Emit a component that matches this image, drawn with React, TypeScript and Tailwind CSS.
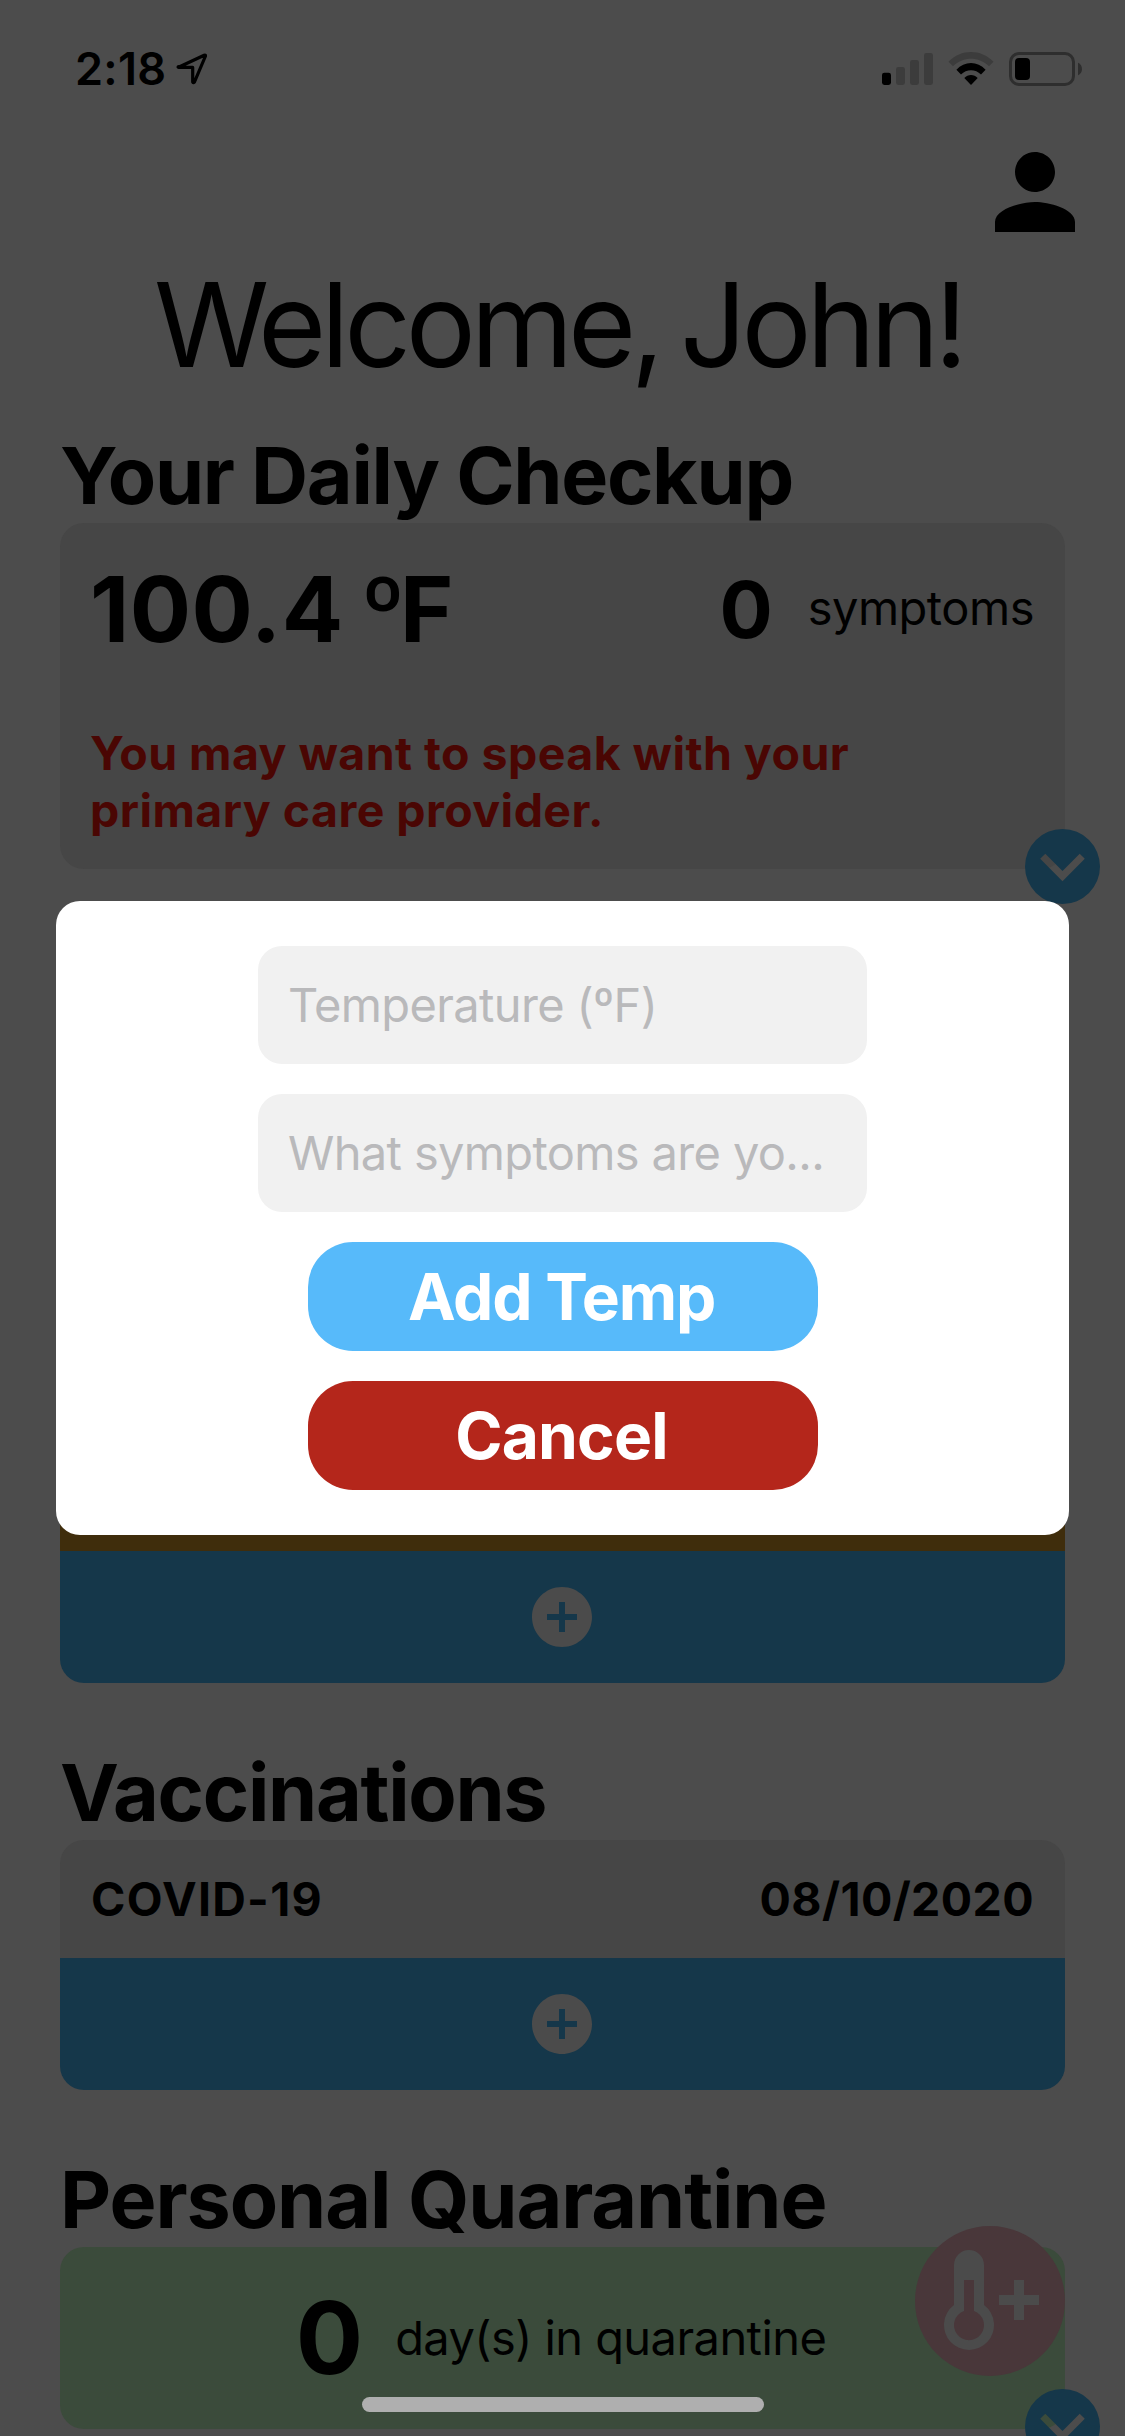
import type { ReactNode } from 'react'
import { MdAddCircle, MdPerson } from 'react-icons/md'

const VACCINATIONS = [{ name: 'COVID-19', date: '08/10/2020' }]

function StatusBar() {
  return (
    <div className="flex h-[132px] items-start justify-between pl-[75px] pr-[42px]">
      <div className="flex items-start pt-[39px]">
        <span className="w-[92px] text-[45px] font-semibold leading-[60px] tracking-[0.3px]">2:18</span>
        <svg className="ml-[9px] mt-[13px]" width="31" height="33" viewBox="0 0 31 33" fill="none">
          <path
            d="M2.5 15.2 28.2 3.2Q30 2.6 29.3 4.5L18.4 30.2Q17.2 31.4 16.7 30V15.4H2.8Q1.6 15.2 2.5 14.6"
            stroke="black"
            strokeWidth="3.2"
            strokeLinejoin="round"
            strokeLinecap="round"
          />
        </svg>
      </div>
      <div className="flex items-start pt-[52px]">
        <svg width="51" height="34" viewBox="0 0 51 34">
          <rect x="0" y="20.7" width="9" height="12.3" rx="2.4" fill="black" />
          <rect x="14" y="15" width="9" height="18" rx="2.4" fill="#3c3c3c" />
          <rect x="28" y="8" width="9" height="25" rx="2.4" fill="#3c3c3c" />
          <rect x="42" y="1" width="9" height="32" rx="2.4" fill="#3c3c3c" />
        </svg>
        <svg className="ml-[15px]" width="46" height="34" viewBox="0 0 46 34">
          <path d="M0.5 9.8C13-3.2 33-3.2 45.5 9.8L41 14.3C31 4.3 15 4.3 5 14.3Z" fill="#3c3c3c" />
          <path d="M8.4 17.7C16.5 8.9 29.5 8.9 37.6 17.7L33 22.4C27.5 16.7 18.5 16.7 13 22.4Z" fill="black" />
          <path d="M16.3 26C20 22 26 22 29.7 26L23 33Z" fill="black" />
        </svg>
        <svg className="ml-[15px]" width="74" height="34" viewBox="0 0 74 34">
          <rect x="1.5" y="1.5" width="63" height="31" rx="8.5" fill="none" stroke="#2e2e2e" strokeWidth="3" />
          <rect x="6" y="6" width="15" height="22" rx="4" fill="black" />
          <path d="M69 10.8C74.3 12.5 74.3 21.5 69 23.2Z" fill="#2e2e2e" />
        </svg>
      </div>
    </div>
  )
}

function Section({ title, className, children }: { title: string; className: string; children: ReactNode }) {
  return (
    <section className="px-[60px]">
      <h2 className={`h-24 whitespace-nowrap text-[79px] font-bold leading-[96px] ${className}`}>{title}</h2>
      {children}
    </section>
  )
}

function AddRow() {
  return (
    <button className="flex h-[132px] w-full items-center justify-center rounded-b-3xl bg-[#15374a] pr-px">
      <MdAddCircle className="size-[72px] text-[#4b4b4b]" />
    </button>
  )
}

// Arrow is cut out of the disc so the card edge shows through it
function ExpandButton() {
  return (
    <button className="absolute -right-[34.5px] -bottom-[34.5px] size-[75px]">
      <svg width="75" height="75" viewBox="0 0 75 75">
        <path
          fillRule="evenodd"
          fill="#15374a"
          d="M37.5 0a37.5 37.5 0 1 1 0 75a37.5 37.5 0 0 1 0-75ZM15.2 29.8 37.5 52.2 59.8 29.8 54.7 24.8 37.5 42 20.3 24.8Z"
        />
      </svg>
    </button>
  )
}

function AddTempFab() {
  return (
    <button className="absolute left-[915px] top-[2226px] size-[150px] rounded-full bg-[#49373a]">
      <svg width="150" height="150" viewBox="0 0 150 150">
        <path
          fillRule="evenodd"
          fill="#4b4b4b"
          d="M69 79V39a15 15 0 0 0-30 0v40a25 25 0 1 0 30 0ZM49 54h10v31a15 15 0 1 1-10 0Z"
        />
        <path fill="#4b4b4b" d="M99 54h10v15h15v10h-15v15H99V79H84V69h15Z" />
      </svg>
    </button>
  )
}

function Field({ placeholder }: { placeholder: string }) {
  return (
    <div className="flex h-[118px] w-[609px] items-center rounded-3xl bg-[#f1f1f1] px-[30px]">
      <span className="whitespace-nowrap text-[47px] leading-[58px] tracking-[-0.64px] text-[#b9b9bb]">
        {placeholder}
      </span>
    </div>
  )
}

function AddTempModal() {
  return (
    <div className="absolute inset-0 flex items-center justify-center">
      <div className="flex w-[1013px] flex-col items-center gap-[30px] rounded-3xl bg-white py-[45px]">
        <Field placeholder="Temperature (ºF)" />
        <Field placeholder="What symptoms are yo..." />
        <button className="h-[109px] w-[510px] rounded-[45px] bg-[#57bafa] pr-[2px] text-[64px] font-bold tracking-[-1.2px] text-white">
          Add Temp
        </button>
        <button className="h-[109px] w-[510px] rounded-[45px] bg-[#b4261b] pr-[2px] text-[64px] font-bold tracking-[-0.81px] text-white">
          Cancel
        </button>
      </div>
    </div>
  )
}

export default function App() {
  return (
    <div className="relative h-[2436px] w-[1125px] overflow-hidden bg-[#4c4c4c] font-['Inter','Liberation_Sans',sans-serif] text-black">
      <StatusBar />
      <div className="flex h-[120px] justify-end pr-[30px]">
        <MdPerson className="size-[120px]" />
      </div>
      <h1 className="mb-[30px] whitespace-nowrap pl-[154px] text-[117px] leading-[145px] tracking-[-5.25px] [word-spacing:-7px]">
        Welcome, John!
      </h1>

      <Section title="Your Daily Checkup" className="tracking-[-1.3px]">
        <div className="relative h-[346px] rounded-3xl bg-[#464646] px-[30px] pt-[31px]">
          <div className="flex h-[110px] items-center justify-between">
            <span className="whitespace-nowrap text-[91px] font-bold leading-[110px] tracking-[0.5px] [word-spacing:-6px]">
              100.4 <span className="font-black tracking-[-6px]">º</span>F
            </span>
            <div className="mr-px flex items-center gap-[35px]">
              <span className="text-[79px] font-bold leading-[96px]">0</span>
              <span className="pb-0.5 text-[47px] leading-[58px] tracking-[-0.49px]">symptoms</span>
            </div>
          </div>
          <p className="mt-[61px] w-[800px] text-[46.5px] font-bold leading-[57px] tracking-[0.43px] text-[#4a0603]">
            You may want to speak with your primary care provider.
          </p>
          <ExpandButton />
        </div>
      </Section>

      {/* This card's heading and rows sit behind the modal */}
      <div className="mb-[61px] mt-[157px] px-[60px]">
        <div className="h-[525px] rounded-t-3xl bg-[#3f2d0c]" />
        <AddRow />
      </div>

      <Section title="Vaccinations" className="tracking-[-1.3px]">
        {VACCINATIONS.map((v) => (
          <div
            key={v.name}
            className="flex h-[118px] items-center justify-between rounded-t-3xl bg-[#464646] pl-[31px] pr-[31px] pt-0.5 text-[46.5px] font-bold"
          >
            <span className="tracking-[1.28px]">{v.name}</span>
            <span className="tracking-[0.4px]">{v.date}</span>
          </div>
        ))}
        <AddRow />
      </Section>

      <div className="mt-[61px]">
        <Section title="Personal Quarantine" className="tracking-[-1.07px]">
          <div className="relative flex h-[182px] items-center justify-center gap-[32px] rounded-3xl bg-[#3b4b3b] pr-[3px]">
            <span className="text-[100px] font-bold leading-[120px]">0</span>
            <span className="whitespace-nowrap text-[47px] leading-[58px] tracking-[-0.56px]">
              day(s) in quarantine
            </span>
            <ExpandButton />
          </div>
        </Section>
      </div>

      <AddTempFab />
      <AddTempModal />
      <div className="absolute left-[362px] top-[2397px] h-[15px] w-[402px] rounded-full bg-[#afafaf]" />
    </div>
  )
}
